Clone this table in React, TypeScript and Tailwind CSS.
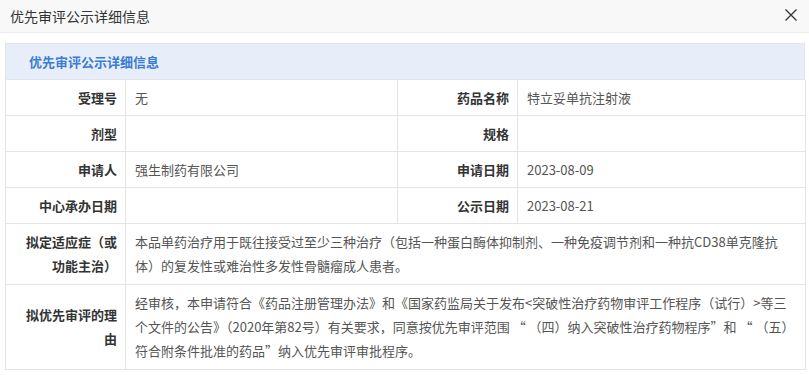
import React from "react";

const font = { fontFamily: '"Microsoft YaHei", "Noto Sans CJK SC", "Noto Sans", sans-serif' };

function Label({ children, tall }: { children: React.ReactNode; tall?: boolean }) {
  return (
    <div
      className={`flex items-center justify-end text-right border-r border-b border-[#e4e4e4] pl-[16px] pr-[8px] font-bold text-[#333] text-[13px] ${
        tall ? "py-[6px] leading-[24px]" : "h-[36px]"
      }`}
    >
      <span>{children}</span>
    </div>
  );
}

function Value({ children, span, tall }: { children?: React.ReactNode; span?: boolean; tall?: boolean }) {
  return (
    <div
      className={`flex items-center border-r border-b border-[#e4e4e4] pl-[9px] pr-[12px] text-[#555] text-[13px] ${
        span ? "col-span-3" : ""
      } ${tall ? "py-[6px] leading-[24px]" : "h-[36px]"}`}
    >
      <span>{children}</span>
    </div>
  );
}

export default function App() {
  return (
    <div className="w-[809px] h-[375px] bg-white overflow-hidden" style={font}>
      <div className="h-[33px] bg-[#f8f8f8] border-b border-[#ededed] flex items-center justify-between pl-[10px] pr-[6px]">
        <span className="text-[14px] text-[#333]">优先审评公示详细信息</span>
        <svg width="20" height="20" viewBox="0 0 20 20" className="mr-[2px] mt-[-2px]">
          <path d="M4.5 4.5 L15.5 15.5 M15.5 4.5 L4.5 15.5" stroke="#333" strokeWidth="1.3" fill="none" />
        </svg>
      </div>
      <div className="mt-[10px] ml-[5px] w-[800px] border-t border-l border-[#e4e4e4]">
        <div className="h-[36px] bg-[#e7eef9] border-r border-b border-[#e0e6ee] flex items-center pl-[23px]">
          <span className="text-[13px] font-bold text-[#3a7bd5]">优先审评公示详细信息</span>
        </div>
        <div className="grid grid-cols-[120px_272px_120px_288px]">
          <Label>受理号</Label>
          <Value>无</Value>
          <Label>药品名称</Label>
          <Value>特立妥单抗注射液</Value>

          <Label>剂型</Label>
          <Value />
          <Label>规格</Label>
          <Value />

          <Label>申请人</Label>
          <Value>强生制药有限公司</Value>
          <Label>申请日期</Label>
          <Value>2023-08-09</Value>

          <Label>中心承办日期</Label>
          <Value />
          <Label>公示日期</Label>
          <Value>2023-08-21</Value>

          <Label tall>拟定适应症（或功能主治）</Label>
          <Value span tall>
            本品单药治疗用于既往接受过至少三种治疗（包括一种蛋白酶体抑制剂、一种免疫调节剂和一种抗CD38单克隆抗体）的复发性或难治性多发性骨髓瘤成人患者。
          </Value>

          <Label tall>拟优先审评的理由</Label>
          <Value span tall>
            经审核，本申请符合《药品注册管理办法》和《国家药监局关于发布&lt;突破性治疗药物审评工作程序（试行）&gt;等三个文件的公告》（2020年第82号）有关要求，同意按优先审评范围 “ （四）纳入突破性治疗药物程序”和 “ （五）符合附条件批准的药品”纳入优先审评审批程序。
          </Value>
        </div>
      </div>
    </div>
  );
}
